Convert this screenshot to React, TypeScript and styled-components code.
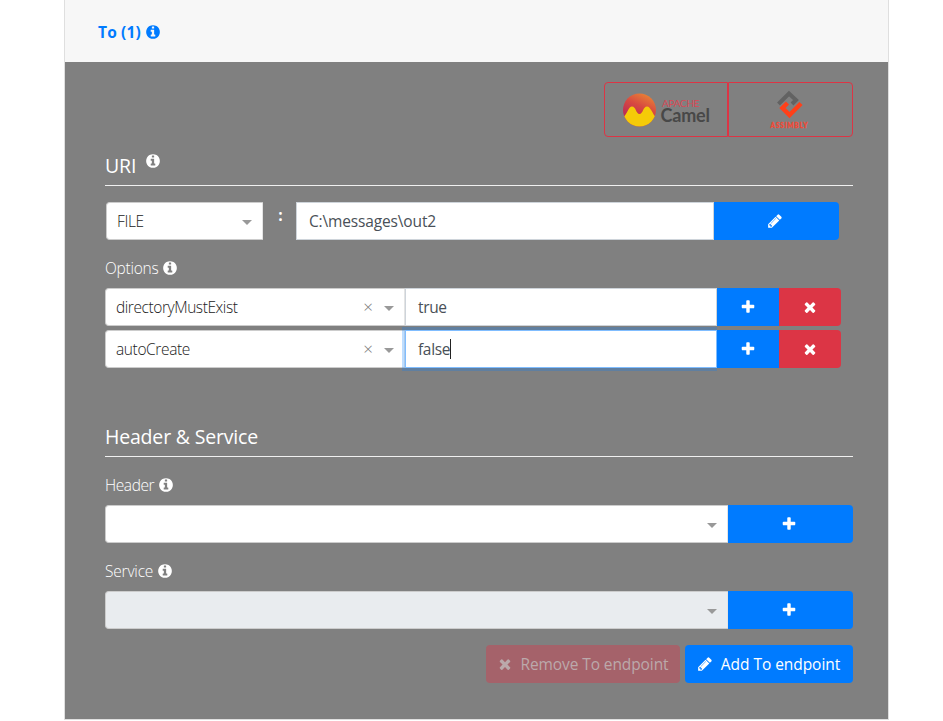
import React from "react";
import styled, { createGlobalStyle, css } from "styled-components";

const GlobalStyle = createGlobalStyle`
  *, *::before, *::after { box-sizing: border-box; }
  body {
    margin: 0;
    background: #fff;
    font-family: "Open Sans", "Noto Sans", sans-serif;
    font-size: 15.5px;
    line-height: 24px;
    color: #fff;
    overflow: hidden;
  }
`;

const ICONS = {
  plus: "M1600 736v192q0 40-28 68t-68 28h-416v416q0 40-28 68t-68 28h-192q-40 0-68-28t-28-68v-416h-416q-40 0-68-28t-28-68v-192q0-40 28-68t68-28h416v-416q0-40 28-68t68-28h192q40 0 68 28t28 68v416h416q40 0 68 28t28 68z",
  times:
    "M1490 1322q0 40-28 68l-136 136q-28 28-68 28t-68-28l-294-294-294 294q-28 28-68 28t-68-28l-136-136q-28-28-28-68t28-68l294-294-294-294q-28-28-28-68t28-68l136-136q28-28 68-28t68 28l294 294 294-294q28-28 68-28t68 28l136 136q28 28 28 68t-28 68l-294 294 294 294q28 28 28 68z",
  pencil:
    "M491 1536l91-91-235-235-91 91v107h128v128h107zm523-928q0-22-22-22-10 0-17 7l-542 542q-7 7-7 17 0 22 22 22 10 0 17-7l542-542q7-7 7-17zm-54-192l416 416-832 832h-416v-416zm683 96q0 53-37 90l-166 166-416-416 166-165q36-38 90-38 53 0 91 38l235 234q37 39 37 91z",
  info: "M1152 1376v-160q0-14-9-23t-23-9h-96v-512q0-14-9-23t-23-9h-320q-14 0-23 9t-9 23v160q0 14 9 23t23 9h96v320h-96q-14 0-23 9t-9 23v160q0 14 9 23t23 9h448q14 0 23-9t9-23zm-128-896v-160q0-14-9-23t-23-9h-192q-14 0-23 9t-9 23v160q0 14 9 23t23 9h192q14 0 23-9t9-23zm640 416q0 209-103 385.500t-279.500 279.500-385.500 103-385.500-103-279.500-279.500-103-385.500 103-385.500 279.500-279.500 385.500-103 385.500 103 279.500 279.500 103 385.500z",
};

const IconSvg = styled.svg`
  display: block;
  flex: none;
  width: 16px;
  height: 16px;
  fill: currentColor;
`;

const Icon = ({ name }: { name: keyof typeof ICONS }) => (
  <IconSvg viewBox="0 0 1792 1792" aria-hidden="true">
    <path d={ICONS[name]} />
  </IconSvg>
);

const Card = styled.main`
  width: 825px;
  height: 720px;
  margin-left: 64px;
  border: 1px solid #dfdfdf;
  border-top: 0;
`;

const CardHeader = styled.header`
  display: flex;
  align-items: center;
  height: 62px;
  padding: 2px 33px 0;
  background: #f7f7f7;
  color: #007bff;
  font-weight: 700;
  gap: 4px;
`;

const CardBody = styled.section`
  height: 657px;
  padding: 20px 35px 0 40px;
  background: #808080;
`;

const Text = styled.span<{ $spacing?: number }>`
  letter-spacing: ${(p) => p.$spacing ?? 0}px;
  white-space: nowrap;
`;

const LogoGroup = styled.div`
  display: flex;
  width: 249px;
  height: 55px;
  margin-left: auto;
`;

const LogoButton = styled.button<{ $side: "left" | "right" }>`
  display: block;
  width: ${(p) => (p.$side === "left" ? 124 : 125)}px;
  padding: 0;
  border: 1px solid #dc3545;
  background: transparent;
  border-radius: ${(p) => (p.$side === "left" ? "4px 0 0 4px" : "0 4px 4px 0")};

  svg { display: block; }
`;

const SectionTitle = styled.h5<{ $top: number }>`
  display: flex;
  align-items: flex-start;
  height: 33px;
  margin: ${(p) => p.$top}px 0 0;
  border-bottom: 1px solid #f0f0f0;
  font-size: 19.5px;
  font-weight: 400;
  line-height: 26px;

  svg { margin: 0 0 0 9px; }
`;

const Label = styled.div<{ $top: number }>`
  display: flex;
  align-items: center;
  height: 24px;
  margin-top: ${(p) => p.$top}px;
  gap: 3.5px;
  font-weight: 300;
`;

const Row = styled.div<{ $top: number; $left?: number; $right?: number }>`
  display: flex;
  height: 38px;
  margin: ${(p) => `${p.$top}px ${p.$right ?? 0}px 0 ${p.$left ?? 0}px`};
`;

const Select = styled.div<{ $width: number; $disabled?: boolean }>`
  display: flex;
  align-items: center;
  flex: none;
  width: ${(p) => p.$width}px;
  padding: 0 10px;
  border: 1px solid #ccc;
  border-right-color: #e4e4e4;
  border-radius: 4px 0 0 4px;
  background: ${(p) => (p.$disabled ? "#e9ecef" : "#fff")};
  color: #222;
  font-weight: 300;
`;

const Caret = styled.i`
  margin-left: auto;
  border: 5px solid transparent;
  border-top-color: #999;
  border-bottom: 0;
  margin-top: 2px;
`;

const Clear = styled.span`
  margin-left: auto;
  font: 300 17px/20px "Open Sans", sans-serif;
  color: #777;

  & + ${Caret} { margin-left: 11px; }
`;

const Input = styled.div<{ $focused?: boolean }>`
  display: flex;
  align-items: center;
  flex: 1;
  min-width: 0;
  padding: 0 12px;
  border: 1px solid #ced4da;
  background: #fff;
  color: #495057;
  ${(p) =>
    p.$focused &&
    css`
      z-index: 1;
      border-color: #80bdff;
      box-shadow: 0 0 0 3px rgba(0, 123, 255, 0.25);
      clip-path: inset(-4px 0 -4px -4px);
    `}
`;

const TextCursor = styled.i`
  width: 1px;
  height: 20px;
  background: #222;
`;

const Colon = styled.div`
  width: 33px;
  padding: 1px 0 0 2px;
  text-align: center;
  font-weight: 700;
`;

const Button = styled.button<{ $width: number; $tone?: "danger"; $shape?: "right" | "square" }>`
  display: flex;
  align-items: center;
  justify-content: center;
  flex: none;
  width: ${(p) => p.$width}px;
  height: 38px;
  padding: 0 ${(p) => (p.$width === 125 ? 3 : 1)}px 0 0;
  gap: 8px;
  border: 0;
  border-radius: ${(p) => (p.$shape === "right" ? "0 4px 4px 0" : p.$shape === "square" ? 0 : "4px")};
  background: ${(p) => (p.$tone === "danger" ? "#dc3545" : "#007bff")};
  color: #fff;
  font: inherit;

  &:disabled {
    background: #a5626a;
    color: #bba9ab;
  }
`;

const Actions = styled.footer`
  display: flex;
  justify-content: flex-end;
  gap: 5px;
  margin-top: 16px;
`;

const CamelLogo = () => (
  <svg width="122" height="53" viewBox="605 83 122 53" role="img" aria-label="Apache Camel">
    <defs>
      <linearGradient id="camelSky" x1="0.7" y1="0" x2="0.35" y2="0.75">
        <stop offset="0" stopColor="#e98235" />
        <stop offset="0.5" stopColor="#d84a40" />
        <stop offset="1" stopColor="#bd2c55" />
      </linearGradient>
      <clipPath id="camelDisc">
        <circle cx="639.5" cy="110" r="16.5" />
      </clipPath>
    </defs>
    <circle cx="639.5" cy="110" r="16.5" fill="url(#camelSky)" />
    <path
      clipPath="url(#camelDisc)"
      fill="#f5cb08"
      d="M622 118C627 116 628 106.500 632 106.500C636 106.500 636 114 639.500 114C643 114 643 106.500 647 106.500C651 106.500 653 116 657 118V128H622Z"
    />
    <text x="662" y="106.500" fontFamily="Lato" fontSize="10" fontWeight="400" fill="#d94855" textLength="37.500">APACHE</text>
    <text x="660.500" y="122" fontFamily="Lato" fontSize="18" fontWeight="700" fill="#484848" textLength="49.500">Camel</text>
  </svg>
);

const AssimblyLogo = () => (
  <svg width="123" height="53" viewBox="729 83 123 53" role="img" aria-label="Assimbly">
    <path d="M778.500 104L789 93.500L796 100L792 104" fill="none" stroke="#626262" strokeWidth="4" />
    <path d="M787.500 103L782.500 108L789.500 115L801 103.500" fill="none" stroke="#ff4019" strokeWidth="4.500" />
    <text x="770.500" y="127.500" fontFamily="Lato" fontSize="6.500" fontWeight="900" fill="#f14a36" stroke="#f14a36" strokeWidth="0.300" textLength="37">ASSIMBLY</text>
  </svg>
);

const OPTIONS = [
  { name: "directoryMustExist", value: "true", focused: false, spacing: -0.43 },
  { name: "autoCreate", value: "false", focused: true, spacing: -0.38 },
];

export default function App() {
  return (
    <>
      <GlobalStyle />
      <Card>
        <CardHeader>
          <Text $spacing={0.15}>To (1)</Text>
          <Icon name="info" />
        </CardHeader>
        <CardBody>
          <LogoGroup>
            <LogoButton $side="left"><CamelLogo /></LogoButton>
            <LogoButton $side="right"><AssimblyLogo /></LogoButton>
          </LogoGroup>

          <SectionTitle $top={16}>
            <Text $spacing={-0.1}>URI</Text>
            <Icon name="info" />
          </SectionTitle>
          <Row $top={16} $left={1} $right={14}>
            <Select $width={157}>
              <Text $spacing={-0.4}>FILE</Text>
              <Caret />
            </Select>
            <Colon>:</Colon>
            <Input><Text $spacing={-0.15}>C:\messages\out2</Text></Input>
            <Button $width={125} $shape="right" aria-label="Edit"><Icon name="pencil" /></Button>
          </Row>

          <Label $top={16}>
            <Text $spacing={-0.25}>Options</Text>
            <Icon name="info" />
          </Label>
          {OPTIONS.map((option, index) => (
            <Row key={option.name} $top={index ? 4 : 8} $right={12}>
              <Select $width={300}>
                <Text $spacing={option.spacing}>{option.name}</Text>
                <Clear>×</Clear>
                <Caret />
              </Select>
              <Input $focused={option.focused}>
                <Text $spacing={-0.35}>{option.value}</Text>
                {option.focused && <TextCursor />}
              </Input>
              <Button $width={62} $shape="square" aria-label="Add option"><Icon name="plus" /></Button>
              <Button $width={62} $tone="danger" $shape="right" aria-label="Remove option"><Icon name="times" /></Button>
            </Row>
          ))}

          <SectionTitle $top={56}><Text $spacing={-0.18}>Header &amp; Service</Text></SectionTitle>
          <Label $top={16}>
            <Text $spacing={-0.4}>Header</Text>
            <Icon name="info" />
          </Label>
          <Row $top={8}>
            <Select $width={623}><Caret /></Select>
            <Button $width={125} $shape="right" aria-label="Add header"><Icon name="plus" /></Button>
          </Row>
          <Label $top={16}>
            <Text $spacing={-0.2}>Service</Text>
            <Icon name="info" />
          </Label>
          <Row $top={8}>
            <Select $width={623} $disabled><Caret /></Select>
            <Button $width={125} $shape="right" aria-label="Add service"><Icon name="plus" /></Button>
          </Row>
          <Actions>
            <Button $width={194} $tone="danger" disabled>
              <Icon name="times" />
              <Text $spacing={-0.1}>Remove To endpoint</Text>
            </Button>
            <Button $width={168}>
              <Icon name="pencil" />
              <Text $spacing={-0.05}>Add To endpoint</Text>
            </Button>
          </Actions>
        </CardBody>
      </Card>
    </>
  );
}
